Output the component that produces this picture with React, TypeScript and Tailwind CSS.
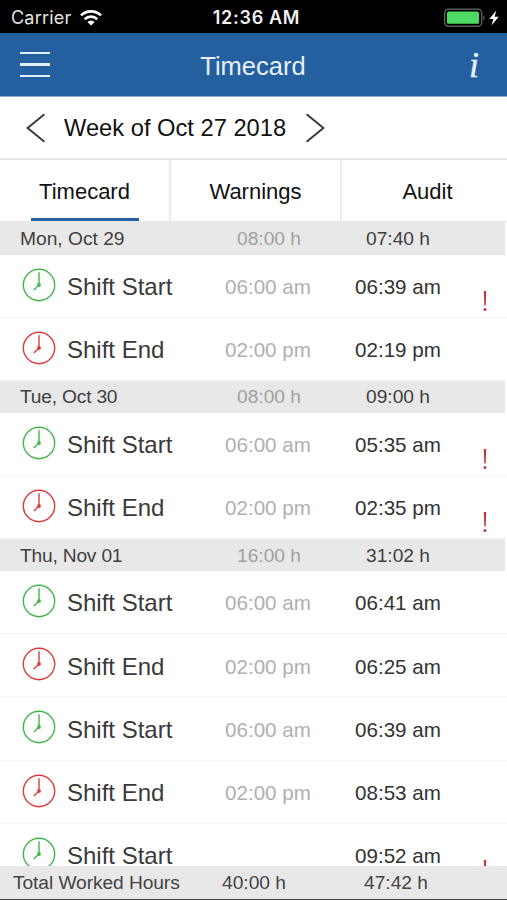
import { Fragment } from 'react'

type Shift = {
  kind: 'start' | 'end'
  planned?: string
  actual: string
  warning?: boolean
}

type Day = {
  date: string
  planned: string
  actual: string
  shifts: Shift[]
}

const days: Day[] = [
  {
    date: 'Mon, Oct 29',
    planned: '08:00 h',
    actual: '07:40 h',
    shifts: [
      { kind: 'start', planned: '06:00 am', actual: '06:39 am', warning: true },
      { kind: 'end', planned: '02:00 pm', actual: '02:19 pm' },
    ],
  },
  {
    date: 'Tue, Oct 30',
    planned: '08:00 h',
    actual: '09:00 h',
    shifts: [
      { kind: 'start', planned: '06:00 am', actual: '05:35 am', warning: true },
      { kind: 'end', planned: '02:00 pm', actual: '02:35 pm', warning: true },
    ],
  },
  {
    date: 'Thu, Nov 01',
    planned: '16:00 h',
    actual: '31:02 h',
    shifts: [
      { kind: 'start', planned: '06:00 am', actual: '06:41 am' },
      { kind: 'end', planned: '02:00 pm', actual: '06:25 am' },
      { kind: 'start', planned: '06:00 am', actual: '06:39 am' },
      { kind: 'end', planned: '02:00 pm', actual: '08:53 am' },
      { kind: 'start', actual: '09:52 am', warning: true },
    ],
  },
]

const tabs = ['Timecard', 'Warnings', 'Audit']

function ClockIcon({ className }: { className: string }) {
  return (
    <svg
      viewBox="0 0 34 34"
      className={`h-[34px] w-[34px] shrink-0 ${className}`}
      fill="none"
      stroke="currentColor"
      strokeWidth="1.4"
    >
      <circle cx="17" cy="17" r="15.7" />
      <path d="M17 4.3V17L11.8 22" />
      <circle cx="17" cy="17" r="1.9" fill="currentColor" stroke="none" />
    </svg>
  )
}

function StatusBar() {
  return (
    <div className="grid h-[33px] shrink-0 grid-cols-3 items-center bg-black font-['Inter',sans-serif] text-white">
      <div className="flex items-center pt-[3px] pl-[11px]">
        <span className="w-[69px] text-[18px] leading-[22px] tracking-[0.2px] text-[#e4e4e4]">
          Carrier
        </span>
        <svg viewBox="0 0 22 16" className="h-4 w-[22px]" fill="none" stroke="#fff" strokeWidth="2.7">
          <path d="M1 5.4a14.4 14.4 0 0 1 20 0" />
          <path d="M4.7 9.2a9.1 9.1 0 0 1 12.6 0" />
          <path d="M11 15.6 7.3 11.9a5.3 5.3 0 0 1 7.4 0Z" fill="#fff" stroke="none" />
        </svg>
      </div>

      <span className="pt-[3px] pl-[6px] text-center text-[18px] leading-[22px] font-semibold tracking-[0.7px] whitespace-nowrap text-[#f2f2f2]">
        12:36 AM
      </span>

      <svg viewBox="0 0 58 20" className="mt-[2px] mr-[5px] h-5 w-[58px] justify-self-end">
        <rect x="0.7" y="1.2" width="37" height="17" rx="3.6" fill="none" stroke="#5c5c5c" strokeWidth="1.4" />
        <rect x="3" y="3.6" width="32" height="12.2" rx="1.6" fill="#4cd964" />
        <path d="M39.3 7.2c1.8.8 1.8 4.6 0 5.4Z" fill="#5c5c5c" />
        <path d="M52.3 2.4 45.3 11h4l-1.8 6.6 7.2-8.8h-4.1Z" fill="#fff" />
      </svg>
    </div>
  )
}

function ShiftRow({ shift }: { shift: Shift }) {
  const isStart = shift.kind === 'start'

  return (
    <div className="flex h-[63.25px] shrink-0 border-b border-[#f5f5f5] pl-[22px] leading-[28px]">
      <ClockIcon className={isStart ? 'mt-[13px] text-[#43b649]' : 'mt-[13px] text-[#dc3c3c]'} />

      <span className="mt-[18.4px] ml-[11px] w-[158px] text-[24px] text-[#3a3a3a]">
        {isStart ? 'Shift Start' : 'Shift End'}
      </span>

      <span className="mt-[18.4px] w-[130px] text-[20.6px] text-[#b0b0b0]">
        {shift.planned}
      </span>

      <span className="mt-[18.4px] w-[127px] text-[20.6px] text-[#333333]">
        {shift.actual}
      </span>

      {shift.warning && (
        <svg viewBox="0 0 6 22" className="mt-[35.5px] h-[22px] w-[6px] fill-[#c0383c]">
          <path d="M1.8 1h2.4l-.5 14.6H2.3Z" />
          <circle cx="3" cy="19.4" r="1.5" />
        </svg>
      )}
    </div>
  )
}

export default function App() {
  return (
    <div className="flex h-[900px] w-[507px] flex-col overflow-hidden bg-white font-['Liberation_Sans',Arial,sans-serif]">
      <StatusBar />

      <header className="grid h-[63px] shrink-0 grid-cols-3 items-center bg-[#245f9f] pr-[28px] pl-5 text-white">
        <button className="flex w-[30px] flex-col gap-[9px]">
          <span className="h-[2.4px] bg-[#e3edf8]" />
          <span className="h-[2.4px] bg-[#e3edf8]" />
          <span className="h-[2.4px] bg-[#e3edf8]" />
        </button>

        <h1 className="pt-[3px] pl-[7px] text-center text-[25.5px] text-[#e8f0fa]">Timecard</h1>

        <button className="justify-self-end pt-px font-['Liberation_Serif',serif] text-[36px] leading-[38px] text-[#e8f0fa] italic [-webkit-text-stroke:0.4px_#e8f0fa]">
          i
        </button>
      </header>

      <div className="flex h-[64px] shrink-0 items-center border-t border-b-2 border-t-[#8eabd8] border-b-[#e6e6e6] pl-[26px]">
        <svg viewBox="0 0 20 30" className="h-[30px] w-5" fill="none" stroke="#3c3c3c" strokeWidth="2">
          <path d="M18.4 1.2 1.6 15l16.8 13.8" />
        </svg>

        <span className="w-[259px] pt-[2px] pl-[18px] text-[23.7px] whitespace-nowrap text-[#111111]">
          Week of Oct 27 2018
        </span>

        <svg viewBox="0 0 20 30" className="h-[30px] w-5" fill="none" stroke="#3c3c3c" strokeWidth="2">
          <path d="M1.6 1.2 18.4 15 1.6 28.8" />
        </svg>
      </div>

      <nav className="grid h-[61px] w-[513px] shrink-0 grid-cols-3 divide-x-2 divide-[#ebebeb]">
        {tabs.map((tab) => (
          <button key={tab} className="flex flex-col items-center text-[22px] text-[#111111]">
            <span className="flex flex-1 items-center pt-[4px]">{tab}</span>

            <span
              className={tab === 'Timecard' ? 'h-[3px] w-[108px] bg-[#245f9f]' : 'h-[3px]'}
            />
          </button>
        ))}
      </nav>

      <main className="flex min-h-0 flex-1 flex-col overflow-hidden border-t border-[#e8e8e8]">
        {days.map((day, dayIndex) => (
          <Fragment key={day.date}>
            <div
              className={`mr-[2px] flex shrink-0 items-center bg-[#e8e8e8] pt-[2px] pl-5 text-[19.2px] text-[#3f3f3f] ${
                dayIndex === 0 ? 'h-[32.5px]' : 'h-[31.7px]'
              }`}
            >
              <span className={dayIndex === 0 ? 'w-[217px]' : 'w-[217px] tracking-[-0.2px]'}>
                {day.date}
              </span>

              <span className="w-[129px] text-[#a0a0a0]">{day.planned}</span>

              <span>{day.actual}</span>
            </div>

            {day.shifts.map((shift, index) => (
              <ShiftRow key={index} shift={shift} />
            ))}
          </Fragment>
        ))}
      </main>

      <footer className="flex h-[34px] shrink-0 items-center border-b border-[#444444] bg-[#e8e8e8] pt-[2px] pl-[13px] text-[19.2px] text-[#444444]">
        <span className="w-[209px] tracking-[-0.08px]">Total Worked Hours</span>

        <span className="w-[142px]">40:00 h</span>

        <span>47:42 h</span>
      </footer>
    </div>
  )
}
